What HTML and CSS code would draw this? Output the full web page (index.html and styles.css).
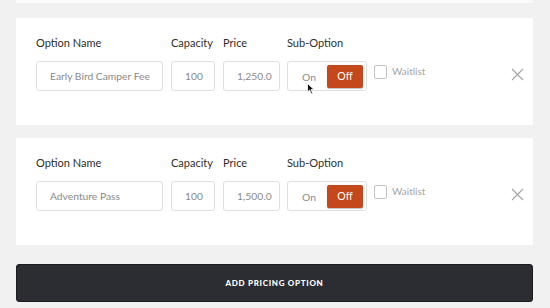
FILE: index.html
```html
<!DOCTYPE html>
<html lang="en">
<head>
    <meta charset="UTF-8">
    <title>Pricing Options</title>
    <link rel="stylesheet" href="styles.css">
</head>
<body>
    <div class="page">
        <div class="card-end"></div>

        <div class="option-card">
            <div class="field field-name">
                <label>Option Name</label>
                <div class="input">Early Bird Camper Fee</div>
            </div>
            <div class="field field-capacity">
                <label>Capacity</label>
                <div class="input">100</div>
            </div>
            <div class="field field-price">
                <label>Price</label>
                <div class="input">1,250.0</div>
            </div>
            <div class="field field-sub">
                <label>Sub-Option</label>
                <div class="toggle">
                    <span class="toggle-on">On</span>
                    <span class="toggle-off">Off</span>
                    <svg class="cursor" width="8" height="12" viewBox="0 0 8 12">
                        <path d="M0.5 0.5 L0.5 9 L2.6 7 L4.2 10.8 L5.6 10.2 L4 6.6 L7 6.6 Z" fill="#111" stroke="#fff" stroke-width="0.8"/>
                    </svg>
                </div>
            </div>
            <div class="waitlist">
                <span class="checkbox"></span>
                <span class="waitlist-label">Waitlist</span>
            </div>
            <button class="remove" aria-label="Remove">
                <svg width="13" height="13" viewBox="0 0 13 13">
                    <path d="M1 1 L12 12 M12 1 L1 12" stroke="#a3a3a3" stroke-width="1.1" fill="none"/>
                </svg>
            </button>
        </div>

        <div class="option-card">
            <div class="field field-name">
                <label>Option Name</label>
                <div class="input">Adventure Pass</div>
            </div>
            <div class="field field-capacity">
                <label>Capacity</label>
                <div class="input">100</div>
            </div>
            <div class="field field-price">
                <label>Price</label>
                <div class="input">1,500.0</div>
            </div>
            <div class="field field-sub">
                <label>Sub-Option</label>
                <div class="toggle">
                    <span class="toggle-on">On</span>
                    <span class="toggle-off">Off</span>
                </div>
            </div>
            <div class="waitlist">
                <span class="checkbox"></span>
                <span class="waitlist-label">Waitlist</span>
            </div>
            <button class="remove" aria-label="Remove">
                <svg width="13" height="13" viewBox="0 0 13 13">
                    <path d="M1 1 L12 12 M12 1 L1 12" stroke="#a3a3a3" stroke-width="1.1" fill="none"/>
                </svg>
            </button>
        </div>

        <button class="add-btn">ADD PRICING OPTION</button>
    </div>
</body>
</html>
```

FILE: styles.css
```css
* {
    box-sizing: border-box;
    margin: 0;
    padding: 0;
}

body {
    font-family: 'Lato', 'Liberation Sans', sans-serif;
    background-color: #f1f1f1;
    color: #333;
    height: 308px;
    overflow: hidden;
}

.page {
    padding: 0 17px 0 16px;
    display: flex;
    flex-direction: column;
}

.card-end {
    height: 3px;
    background: #fbfbfb;
    margin-bottom: 15px;
}

.option-card {
    background: #fff;
    height: 107px;
    display: flex;
    align-items: flex-start;
    padding: 18px 0 0 20px;
    margin-bottom: 13px;
}

.field {
    display: flex;
    flex-direction: column;
    margin-right: 8px;
}

.field label {
    font-size: 11px;
    line-height: 14px;
    color: #2f2f2f;
    margin-bottom: 11px;
    white-space: nowrap;
}

.field-name { width: 127px; }
.field-capacity { width: 44px; }
.field-price { width: 57px; margin-right: 7px; }
.field-sub { width: 80px; margin-right: 7px; }

.input {
    height: 30px;
    border: 1px solid #e0e0e0;
    border-radius: 3px;
    padding: 0 13px;
    font-size: 10.3px;
    line-height: 28px;
    color: #8a8a8a;
    white-space: nowrap;
    overflow: hidden;
}

.toggle {
    position: relative;
    height: 30px;
    border: 1px solid #e0e0e0;
    border-radius: 3px;
    display: flex;
    align-items: center;
    padding: 3px 3px 2px 3px;
}

.toggle-on {
    flex: 1;
    text-align: center;
    font-size: 10.3px;
    color: #8a8a8a;
}

.toggle-off {
    width: 36px;
    height: 23px;
    background: #c5481d;
    border-radius: 2px;
    color: #fff;
    font-size: 10.5px;
    line-height: 23px;
    text-align: center;
    box-shadow: 0 1px 1px rgba(0, 0, 0, 0.25);
}

.cursor {
    position: absolute;
    left: 19px;
    top: 21px;
}

.waitlist {
    display: flex;
    align-items: flex-start;
    margin-top: 29px;
    gap: 5px;
}

.checkbox {
    width: 13px;
    height: 14px;
    border: 1px solid #c4c4c4;
    border-radius: 2px;
    background: #fff;
}

.waitlist-label {
    font-size: 10px;
    line-height: 12px;
    color: #a6a6a6;
}

.remove {
    margin-left: auto;
    margin-right: 9px;
    margin-top: 32px;
    background: none;
    border: none;
    display: flex;
}

.add-btn {
    margin-top: 6px;
    height: 38px;
    background: #2c2d32;
    border: 1px solid #1c1c1f;
    border-radius: 3px;
    color: #fff;
    font-family: 'Lato', 'Liberation Sans', sans-serif;
    font-weight: 900;
    font-size: 8px;
    letter-spacing: 0.7px;
    text-align: center;
}
```
